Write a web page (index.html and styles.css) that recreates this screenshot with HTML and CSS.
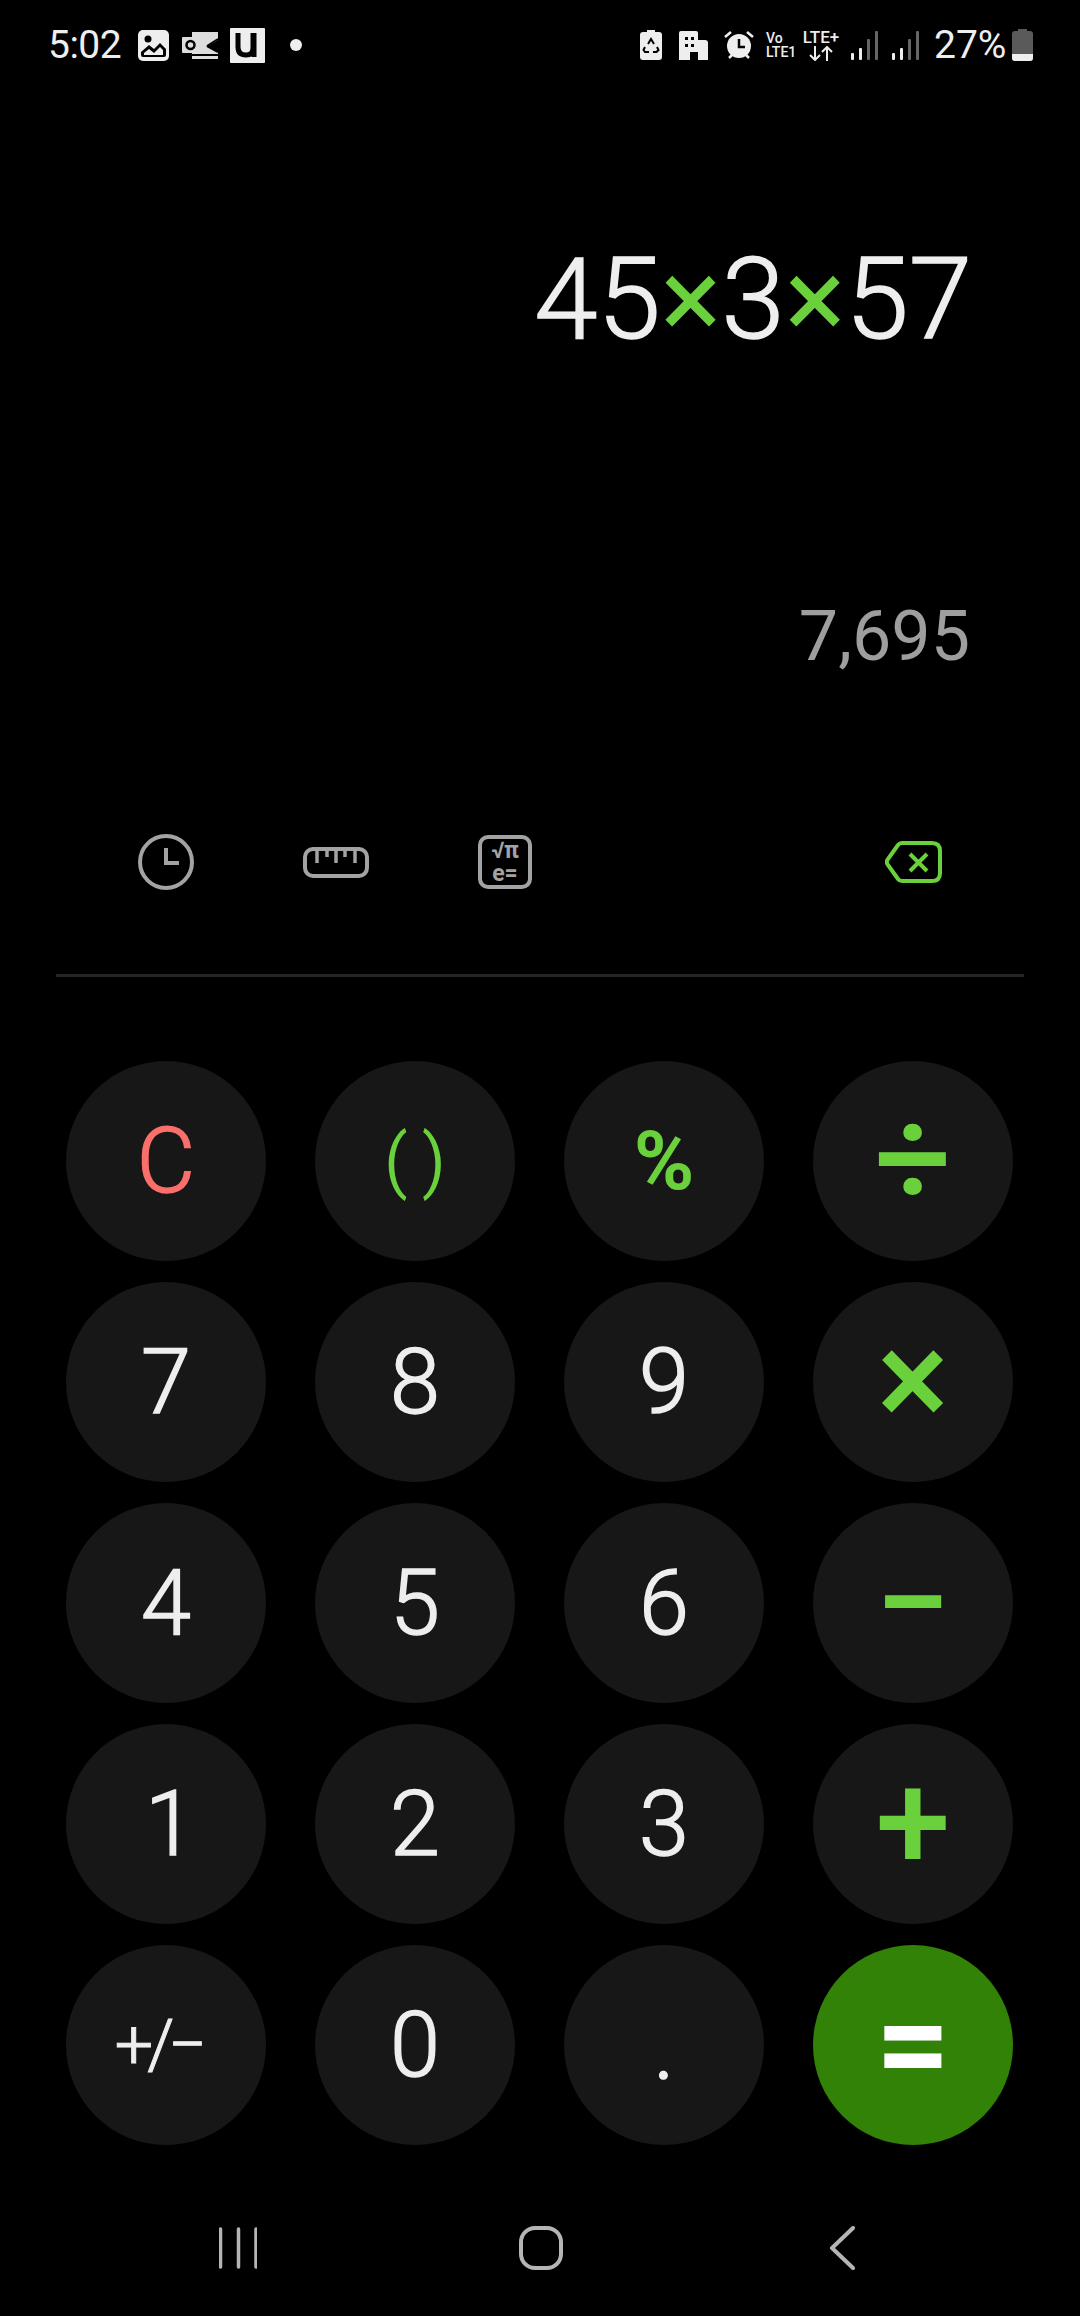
FILE: index.html
```html
<!DOCTYPE html>
<html lang="en">
<head>
<meta charset="utf-8">
<title>Calculator</title>
<link rel="stylesheet" href="styles.css">
</head>
<body>
<div class="phone">
  <header class="status">
    <span class="time">5:02</span>
    <svg class="ic-photo" width="31" height="31" viewBox="0 0 31 31"><rect width="31" height="31" rx="5" fill="#eee"/><circle cx="10" cy="9" r="3.500" fill="#000"/><path d="M3 25v-3l8-7 5 4 6-6 6 6v6q0 2-2 2H5q-2 0-2-2z" fill="#000"/><path d="M6 25v-2l5-4 5 4 6-6 3 3v5z" fill="#eee"/></svg>
    <svg class="ic-mail" width="37" height="28" viewBox="0 0 37 28"><path d="M10 1h26v8L26 15l10 6v7H10z" fill="#ddd"/><path d="M10 24h26M25 15l11-7M25 15l11 6" fill="none" stroke="#000" stroke-width="2"/><rect y="6" width="17" height="16" rx="1" fill="#ddd"/><circle cx="8.500" cy="14" r="4" fill="none" stroke="#000" stroke-width="2.500"/></svg>
    <svg class="ic-u" width="35" height="35" viewBox="0 0 35 35"><rect width="35" height="35" rx="1" fill="#eee"/><path d="M8 5v14q0 8 8 8 7 0 7-7V5M24 5v24" fill="none" stroke="#000" stroke-width="5"/></svg>
    <span class="dot"></span>
    <span class="status-gap"></span>
    <svg class="ic-batsave" width="22" height="30" viewBox="0 0 22 30"><path d="M7 0h8v2h4q3 0 3 3v22q0 3-3 3H3q-3 0-3-3V5q0-3 3-3h4z" fill="#eee"/><path d="M8 14l3-5 3 5M17 17l1.500 3-2 2H13M9 22H5l-1.500-2L5 17" fill="none" stroke="#000" stroke-width="2"/></svg>
    <svg class="ic-building" width="29" height="29" viewBox="0 0 29 29"><path d="M2 0h15q2 0 2 2v7h7q3 0 3 3v17H19v-8h-8v8H0V2q0-2 2-2z" fill="#eee"/><path d="M6 6h3v3H6zM12 6h3v3h-3zM6 13h3v3H6zM12 13h3v3h-3z" fill="#000"/></svg>
    <svg class="ic-alarm" width="30" height="28" viewBox="0 0 30 28"><circle cx="15" cy="15" r="12" fill="#eee"/><path d="M15 8v8h6" fill="none" stroke="#000" stroke-width="2.500"/><path d="M1 6l6-5M29 6l-6-5M5 27l3-3M25 27l-3-3" stroke="#eee" stroke-width="2.500"/></svg>
    <span class="volte"><span>Vo</span><span>LTE1</span></span>
    <span class="lte"><span class="lte-label">LTE+</span>
      <svg width="26" height="15" viewBox="0 0 26 15"><path d="M7 0v14M2 9l5 5 5-5M19 15V1M14 6l5-5 5 5" fill="none" stroke="#eee" stroke-width="2"/></svg></span>
    <svg class="ic-signal" width="27" height="29" viewBox="0 0 27 29"><rect y="22" width="3" height="7" rx="1" fill="#eee"/><rect x="8" y="17" width="3" height="12" rx="1" fill="#eee"/><rect x="16" y="8" width="3" height="21" rx="1" fill="#666"/><rect x="24" width="3" height="29" rx="1" fill="#666"/></svg>
    <svg class="ic-signal2" width="27" height="29" viewBox="0 0 27 29"><rect y="22" width="3" height="7" rx="1" fill="#eee"/><rect x="8" y="17" width="3" height="12" rx="1" fill="#eee"/><rect x="16" y="8" width="3" height="21" rx="1" fill="#666"/><rect x="24" width="3" height="29" rx="1" fill="#666"/></svg>
    <span class="percent">27%</span>
    <svg class="ic-battery" width="21" height="32" viewBox="0 0 21 32"><path d="M6 0h9v2h3q3 0 3 3v24q0 3-3 3H3q-3 0-3-3V5q0-3 3-3h3z" fill="#5a5a5a"/><path d="M0 25h21v4q0 3-3 3H3q-3 0-3-3z" fill="#eee"/></svg>
  </header>

  <section class="display">
    <div class="expression">45<span class="op">×</span>3<span class="op">×</span>57</div>
    <div class="result">7,695</div>
  </section>

  <nav class="tools">
    <svg class="t-clock" width="56" height="56" viewBox="0 0 56 56"><circle cx="28" cy="28" r="26" fill="none" stroke="#a3a3a3" stroke-width="4"/><path d="M28 14v15h13" fill="none" stroke="#a3a3a3" stroke-width="4"/></svg>
    <svg class="t-ruler" width="66" height="31" viewBox="0 0 66 31"><rect x="2" y="2" width="62" height="27" rx="8" fill="none" stroke="#a3a3a3" stroke-width="4"/><path d="M14 3v13M24 3v7M33 3v13M42 3v7M52 3v13" stroke="#a3a3a3" stroke-width="3.500"/></svg>
    <span class="t-math"><span class="m-row">√π</span><span class="m-row">e=</span></span>
    <span class="tools-gap"></span>
    <svg class="t-back" width="57" height="42" viewBox="0 0 57 42"><path d="M17 2h30q8 0 8 8v22q0 8-8 8H17q-2.500 0-4-2L3 24q-2.500-3 0-6L13 4q1.500-2 4-2z" fill="none" stroke="#6ad13c" stroke-width="4"/><path d="M25 13l17 17M42 13L25 30" stroke="#6ad13c" stroke-width="4"/></svg>
  </nav>
  <div class="divider"></div>

  <main class="keypad">
    <div class="key clear">C</div>
    <div class="key paren">( )</div>
    <div class="key pct">%</div>
    <div class="key sym">÷</div>
    <div class="key">7</div>
    <div class="key">8</div>
    <div class="key">9</div>
    <div class="key sym">×</div>
    <div class="key">4</div>
    <div class="key">5</div>
    <div class="key">6</div>
    <div class="key sym minus">−</div>
    <div class="key one">1</div>
    <div class="key">2</div>
    <div class="key">3</div>
    <div class="key sym">+</div>
    <div class="key sign">+/−</div>
    <div class="key">0</div>
    <div class="key point">.</div>
    <div class="key equals">=</div>
  </main>

  <footer class="navbar">
    <svg width="38" height="42" viewBox="0 0 38 42"><path d="M1.500 2v38M19.500 2v38M37 2v38" stroke="#b5b5b5" stroke-width="3.500" stroke-linecap="round"/></svg>
    <svg class="home" width="44" height="44" viewBox="0 0 44 44"><rect x="2" y="2" width="40" height="40" rx="14" fill="none" stroke="#b5b5b5" stroke-width="4"/></svg>
    <svg width="26" height="44" viewBox="0 0 26 44"><path d="M24 2L3 22l21 20" fill="none" stroke="#b5b5b5" stroke-width="4" stroke-linecap="round" stroke-linejoin="round"/></svg>
  </footer>
</div>
</body>
</html>
```
FILE: styles.css
```css
* { box-sizing: border-box; }
html, body { margin: 0; background: #000; }
.phone {
  width: 1080px;
  height: 2316px;
  background: #000;
  color: #eee;
  font-family: Roboto, "Liberation Sans", sans-serif;
  display: flex;
  flex-direction: column;
  overflow: hidden;
}

/* status bar */
.status {
  height: 90px;
  display: flex;
  align-items: center;
  padding: 0 47px 0 48px;
}
.time { font-size: 39px; line-height: 1; width: 72px; letter-spacing: -.5px; }
.ic-photo { margin-left: 18px; }
.ic-mail { margin-left: 13px; }
.ic-u { margin-left: 11px; }
.dot { width: 12px; height: 12px; border-radius: 50%; background: #eee; margin-left: 25px; }
.status-gap { flex: 1; }
.ic-building { margin-left: 17px; }
.ic-alarm { margin-left: 16px; }
.volte {
  margin-left: 12px;
  display: flex;
  flex-direction: column;
  font-size: 14px;
  line-height: 14px;
  font-weight: 500;
  width: 32px;
}
.lte {
  margin-left: 3px;
  display: flex;
  flex-direction: column;
  align-items: center;
  width: 40px;
}
.lte-label { font-size: 17px; line-height: 17px; font-weight: 500; }
.ic-signal { margin-left: 10px; }
.ic-signal2 { margin-left: 14px; }
.percent { margin-left: 15px; font-size: 39px; line-height: 1; width: 72px; }
.ic-battery { margin-left: 6px; }

/* expression and result */
.display {
  height: 742px;
  padding: 144px 108px 0 0;
  text-align: right;
}
.expression {
  font-size: 114px;
  line-height: 130px;
  font-weight: 300;
  color: #eee;
  -webkit-text-stroke: 1.5px currentColor;
}
.expression .op { color: #6ad13c; font-weight: 400; -webkit-text-stroke: 0; }
.result { margin: 232px 2px 0 0; font-size: 70px; line-height: 80px; color: #9e9e9e; }

/* tool row */
.tools {
  display: flex;
  align-items: center;
  height: 60px;
  padding: 0 138px;
}
.t-ruler { margin-left: 109px; }
.t-math {
  margin-left: 109px;
  width: 54px;
  height: 54px;
  border: 4px solid #a3a3a3;
  border-radius: 10px;
  display: flex;
  flex-direction: column;
  align-items: center;
  justify-content: center;
  color: #a3a3a3;
  font-size: 23px;
  line-height: 23px;
  font-weight: 700;
}
.tools-gap { flex: 1; }
.divider { height: 3px; background: #262626; margin: 82px 56px 0; }

/* keypad */
.keypad {
  margin-top: 84px;
  padding: 0 66px;
  display: grid;
  grid-template-columns: repeat(4, 200px);
  grid-auto-rows: 200px;
  column-gap: 49px;
  row-gap: 21px;
}
.key {
  width: 200px;
  height: 200px;
  border-radius: 50%;
  background: #171717;
  color: #eee;
  font-size: 90px;
  display: flex;
  align-items: center;
  justify-content: center;
  font-weight: 300;
  -webkit-text-stroke: 1.5px currentColor;
}
.clear { color: #fb6f6b; }
.one { padding-left: 8px; }
.point { padding-top: 6px; }
.paren { color: #6ad13c; font-size: 68px; }
.pct { color: #6ad13c; font-size: 82px; font-weight: 700; -webkit-text-stroke: 0; }
.sym { color: #6ad13c; font-size: 135px; font-weight: 500; padding-bottom: 4px; -webkit-text-stroke: 0; }
.minus { padding-bottom: 0; }
.sign { font-size: 68px; padding-right: 16px; letter-spacing: -6px; -webkit-text-stroke: 1px currentColor; }
.equals { background: #318206; color: #fff; font-size: 130px; font-weight: 700; padding-bottom: 4px; -webkit-text-stroke: 0; }

/* system navigation */
.navbar {
  margin-top: 81px;
  padding: 0 225px 0 219px;
  display: flex;
  align-items: center;
  justify-content: space-between;
}
.home { margin-right: 5px; }
```
